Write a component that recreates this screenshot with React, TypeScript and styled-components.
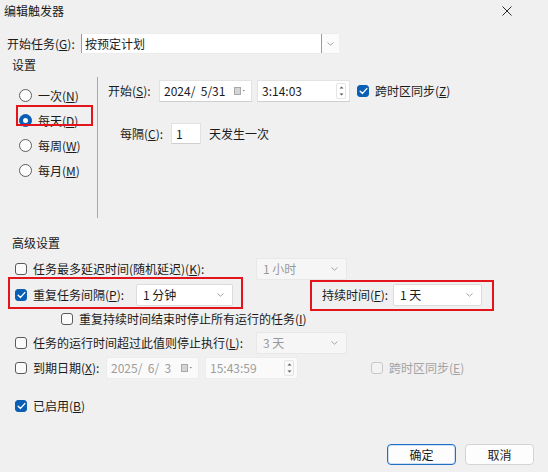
import styled, { createGlobalStyle } from "styled-components";

const GlobalStyle = createGlobalStyle`
  html, body {
    margin: 0;
    padding: 0;
    background: #f0f0f0;
  }
  body {
    font-family: "Noto Sans CJK SC", "Noto Sans", sans-serif;
    font-size: 12px;
    color: #1b1b1b;
  }
`;

function Chevron() {
  return (
    <svg width="7" height="4" viewBox="0 0 7 4">
      <path d="M0.5 0.5 L3.5 3.2 L6.5 0.5" fill="none" stroke="#9a9a9a" strokeWidth="0.9" />
    </svg>
  );
}

function CalendarIcon() {
  return (
    <svg width="12" height="8" viewBox="0 0 12 8">
      <rect x="0.5" y="0.5" width="6" height="7" fill="#d4d4d4" stroke="#a8a8a8" />
      <path d="M8.5 3 L11 3 L9.75 4.4 Z" fill="#8a8a8a" />
    </svg>
  );
}

function SpinIcon() {
  return (
    <svg width="5" height="12" viewBox="0 0 5 12">
      <path d="M0.5 3.5 L2.5 1.5 L4.5 3.5 Z" fill="#555" />
      <path d="M0.5 8.5 L2.5 10.5 L4.5 8.5 Z" fill="#555" />
    </svg>
  );
}

function CheckMark() {
  return (
    <svg width="9" height="8" viewBox="0 0 9 8">
      <path d="M1.2 4.2 L3.5 6.4 L7.8 1.6" fill="none" stroke="#fff" strokeWidth="1.4" strokeLinecap="round" strokeLinejoin="round" />
    </svg>
  );
}

type CheckProps = { checked?: boolean; disabled?: boolean };

function Check({ checked, disabled }: CheckProps) {
  return (
    <CheckBox $checked={checked} $disabled={disabled}>
      {checked && <CheckMark />}
    </CheckBox>
  );
}

export default function App() {
  return (
    <>
      <GlobalStyle />
      <Dialog>
        <TitleBar>
          <TitleText>编辑触发器</TitleText>
          <svg width="10" height="10" viewBox="0 0 10 10">
            <path d="M0.5 0.5 L9.5 9.5 M9.5 0.5 L0.5 9.5" stroke="#2b2b2b" strokeWidth="1" />
          </svg>
        </TitleBar>

        <Row $mt={12} $pl={7} $h={21}>
          <Label $w={74}>
            开始任务(<u>G</u>):
          </Label>
          <Combo>
            <ComboEdit>按预定计划</ComboEdit>
            <ComboArrow>
              <Chevron />
            </ComboArrow>
          </Combo>
        </Row>

        <SectionTitle $mt={3}>设置</SectionTitle>
        <SettingsBody>
          <RadioCol>
            <RadioItem>
              <Radio />
              <Label>
                一次(<u>N</u>)
              </Label>
            </RadioItem>
            <RadioItem $marked>
              <Radio $checked />
              <Label>
                每天(<u>D</u>)
              </Label>
            </RadioItem>
            <RadioItem>
              <Radio />
              <Label>
                每周(<u>W</u>)
              </Label>
            </RadioItem>
            <RadioItem>
              <Radio />
              <Label>
                每月(<u>M</u>)
              </Label>
            </RadioItem>
          </RadioCol>
          <RightPane>
            <Row $h={22}>
              <Label $w={51}>
                开始(<u>S</u>):
              </Label>
              <Field $w={93}>
                <FieldText>2024/  5/31</FieldText>
                <CalendarIcon />
              </Field>
              <Field $w={93} $ml={5}>
                <FieldText>3:14:03</FieldText>
                <Spin>
                  <SpinIcon />
                </Spin>
              </Field>
              <Gap $w={7} />
              <Check checked />
              <Label $ml={6}>
                跨时区同步(<u>Z</u>)
              </Label>
            </Row>
            <Row $mt={21} $pl={12} $h={21}>
              <Label $w={51}>
                每隔(<u>C</u>):
              </Label>
              <Field $w={30} $h={21}>
                <FieldText>1</FieldText>
              </Field>
              <Label $ml={8}>天发生一次</Label>
            </Row>
          </RightPane>
        </SettingsBody>

        <SectionTitle $mt={17}>高级设置</SectionTitle>

        <Row $mt={7} $pl={15} $h={22}>
          <Check />
          <Label $ml={6} $w={223}>
            任务最多延迟时间(随机延迟)(<u>K</u>):
          </Label>
          <Select $w={91} $disabled>
            <span>1 小时</span>
            <Chevron />
          </Select>
        </Row>

        <Row $mt={4} $pl={8} $h={22}>
          <Marked $pad="5px 8px 1px 5px" $m="-7px 0 -3px 0">
            <Check checked />
            <Label $ml={6} $w={103}>
              重复任务间隔(<u>P</u>):
            </Label>
            <Select $w={97}>
              <span>1 分钟</span>
              <Chevron />
            </Select>
          </Marked>
          <Marked $pad="2px 10px 3px 10px" $m="-4px 0 -5px 67px">
            <Label $w={71}>
              持续时间(<u>F</u>):
            </Label>
            <Select $w={89}>
              <span>1 天</span>
              <Chevron />
            </Select>
          </Marked>
        </Row>

        <Row $mt={2} $pl={61} $h={22}>
          <Check />
          <Label $ml={6}>
            重复持续时间结束时停止所有运行的任务(<u>I</u>)
          </Label>
        </Row>

        <Row $mt={2} $pl={15} $h={22}>
          <Check />
          <Label $ml={6} $w={223}>
            任务的运行时间超过此值则停止执行(<u>L</u>):
          </Label>
          <Select $w={91} $disabled>
            <span>3 天</span>
            <Chevron />
          </Select>
        </Row>

        <Row $mt={3} $pl={15} $h={22}>
          <Check />
          <Label $ml={6} $w={73}>
            到期日期(<u>X</u>):
          </Label>
          <Field $w={93} $disabled>
            <FieldText>2025/  6/  3</FieldText>
            <CalendarIcon />
          </Field>
          <Field $w={93} $ml={6} $disabled>
            <FieldText>15:43:59</FieldText>
            <Spin>
              <SpinIcon />
            </Spin>
          </Field>
          <Gap $w={73} />
          <Check disabled />
          <Label $ml={6} $muted>
            跨时区同步(<u>E</u>)
          </Label>
        </Row>

        <Row $mt={16} $pl={15} $h={22}>
          <Check checked />
          <Label $ml={6}>
            已启用(<u>B</u>)
          </Label>
        </Row>

        <ButtonBar>
          <Button $primary>确定</Button>
          <Button>取消</Button>
        </ButtonBar>
      </Dialog>
    </>
  );
}

const Dialog = styled.div`
  width: 548px;
  height: 472px;
  box-sizing: border-box;
  display: flex;
  flex-direction: column;
  background: #f0f0f0;
  overflow: hidden;
`;

const TitleBar = styled.div`
  height: 21px;
  display: flex;
  align-items: center;
  justify-content: space-between;
  padding: 0 36px 0 4px;
`;

const TitleText = styled.span`
  line-height: 16px;
  color: #1a1a1a;
`;

const Row = styled.div<{ $mt?: number; $pl?: number; $h?: number }>`
  display: flex;
  align-items: center;
  margin-top: ${(p) => p.$mt ?? 0}px;
  padding-left: ${(p) => p.$pl ?? 0}px;
  height: ${(p) => p.$h ?? 22}px;
  flex-shrink: 0;
`;

const Label = styled.span<{ $w?: number; $ml?: number; $muted?: boolean }>`
  display: inline-block;
  white-space: pre;
  line-height: 16px;
  flex-shrink: 0;
  width: ${(p) => (p.$w ? `${p.$w}px` : "auto")};
  margin-left: ${(p) => p.$ml ?? 0}px;
  color: ${(p) => (p.$muted ? "#a3a3a3" : "#1b1b1b")};
  u {
    text-underline-offset: 1px;
  }
`;

const Gap = styled.span<{ $w: number }>`
  width: ${(p) => p.$w}px;
  flex-shrink: 0;
`;

const Combo = styled.div`
  display: flex;
  width: 258px;
  height: 21px;
  box-sizing: border-box;
  background: #fbfbfb;
  border-top: 1px solid #ececec;
  border-bottom: 1px solid #ececec;
`;

const ComboEdit = styled.div`
  width: 241px;
  height: 100%;
  box-sizing: border-box;
  display: flex;
  align-items: center;
  padding-left: 3px;
  background: #ffffff;
  border-left: 1px solid #9a9a9a;
  border-right: 1px solid #9a9a9a;
  line-height: 16px;
`;

const ComboArrow = styled.div`
  flex: 1;
  display: flex;
  align-items: center;
  justify-content: center;
`;

const SectionTitle = styled.div<{ $mt: number }>`
  margin-top: ${(p) => p.$mt}px;
  padding-left: 12px;
  height: 16px;
  line-height: 16px;
  flex-shrink: 0;
`;

const SettingsBody = styled.div`
  display: flex;
  margin-top: 4px;
  height: 141px;
  flex-shrink: 0;
`;

const RadioCol = styled.div`
  width: 98px;
  box-sizing: border-box;
  border-right: 1px solid #a8a8a8;
  display: flex;
  flex-direction: column;
  padding-top: 6px;
`;

const RadioItem = styled.div<{ $marked?: boolean }>`
  position: relative;
  height: 25px;
  display: flex;
  align-items: center;
  gap: 6px;
  padding-left: 19px;
  ${(p) =>
    p.$marked &&
    `
    &::after {
      content: "";
      position: absolute;
      left: 16px;
      top: -3px;
      width: 77px;
      height: 21px;
      box-sizing: border-box;
      border: 2px solid #e3141c;
    }
  `}
`;

const Radio = styled.span<{ $checked?: boolean }>`
  width: 13px;
  height: 13px;
  box-sizing: border-box;
  border-radius: 50%;
  flex-shrink: 0;
  display: flex;
  align-items: center;
  justify-content: center;
  background: ${(p) => (p.$checked ? "#0a5fb4" : "#fdfdfd")};
  border: 1px solid ${(p) => (p.$checked ? "#0a5fb4" : "#5e5e5e")};
  &::after {
    content: "";
    width: 5px;
    height: 5px;
    border-radius: 50%;
    background: #ffffff;
    display: ${(p) => (p.$checked ? "block" : "none")};
  }
`;

const CheckBox = styled.span<{ $checked?: boolean; $disabled?: boolean }>`
  width: 12px;
  height: 12px;
  box-sizing: border-box;
  border-radius: 3px;
  flex-shrink: 0;
  display: flex;
  align-items: center;
  justify-content: center;
  background: ${(p) => (p.$checked ? "#0a5fb4" : p.$disabled ? "#f3f3f3" : "#fbfbfb")};
  border: 1px solid
    ${(p) => (p.$checked ? "#0a5fb4" : p.$disabled ? "#c8c8c8" : "#5a5a5a")};
`;

const RightPane = styled.div`
  flex: 1;
  padding-top: 3px;
  padding-left: 10px;
`;

const Field = styled.div<{ $w: number; $h?: number; $ml?: number; $disabled?: boolean }>`
  width: ${(p) => p.$w}px;
  height: ${(p) => p.$h ?? 22}px;
  margin-left: ${(p) => p.$ml ?? 0}px;
  box-sizing: border-box;
  flex-shrink: 0;
  display: flex;
  align-items: center;
  justify-content: space-between;
  padding: 0 5px 0 4px;
  background: ${(p) => (p.$disabled ? "#fafafa" : "#ffffff")};
  border: 1px solid ${(p) => (p.$disabled ? "#ececec" : "#e2e2e2")};
  border-bottom-color: ${(p) => (p.$disabled ? "#ececec" : "#cfcfcf")};
  color: ${(p) => (p.$disabled ? "#9c9c9c" : "#1b1b1b")};
`;

const FieldText = styled.span`
  white-space: pre;
  line-height: 16px;
`;

const Spin = styled.span`
  width: 10px;
  height: 16px;
  box-sizing: border-box;
  display: flex;
  align-items: center;
  justify-content: center;
  border: 1px solid #e4e4e4;
  border-radius: 2px;
  margin-right: -2px;
`;

const Select = styled.div<{ $w: number; $disabled?: boolean }>`
  width: ${(p) => p.$w}px;
  height: 22px;
  box-sizing: border-box;
  flex-shrink: 0;
  display: flex;
  align-items: center;
  justify-content: space-between;
  padding: 0 8px 0 6px;
  line-height: 16px;
  border-radius: 2px;
  background: ${(p) => (p.$disabled ? "#f6f6f6" : "#ffffff")};
  border: 1px solid ${(p) => (p.$disabled ? "#e8e8e8" : "#dcdcdc")};
  color: ${(p) => (p.$disabled ? "#999999" : "#1b1b1b")};
  span {
    white-space: pre;
  }
`;

const Marked = styled.div<{ $pad: string; $m: string }>`
  display: flex;
  align-items: center;
  flex-shrink: 0;
  border: 2px solid #e3141c;
  padding: ${(p) => p.$pad};
  margin: ${(p) => p.$m};
`;

const ButtonBar = styled.div`
  margin-top: auto;
  display: flex;
  justify-content: flex-end;
  gap: 9px;
  padding: 0 14px 7px 0;
`;

const Button = styled.button<{ $primary?: boolean }>`
  width: 69px;
  height: 21px;
  box-sizing: border-box;
  padding: 0;
  font-family: inherit;
  font-size: 12px;
  line-height: 16px;
  color: #1b1b1b;
  background: #fdfdfd;
  border-radius: 4px;
  border: 1px solid ${(p) => (p.$primary ? "#1f6fc5" : "#d4d4d4")};
  box-shadow: ${(p) => (p.$primary ? "inset 0 0 0 1px #cfe0f4" : "none")};
`;
